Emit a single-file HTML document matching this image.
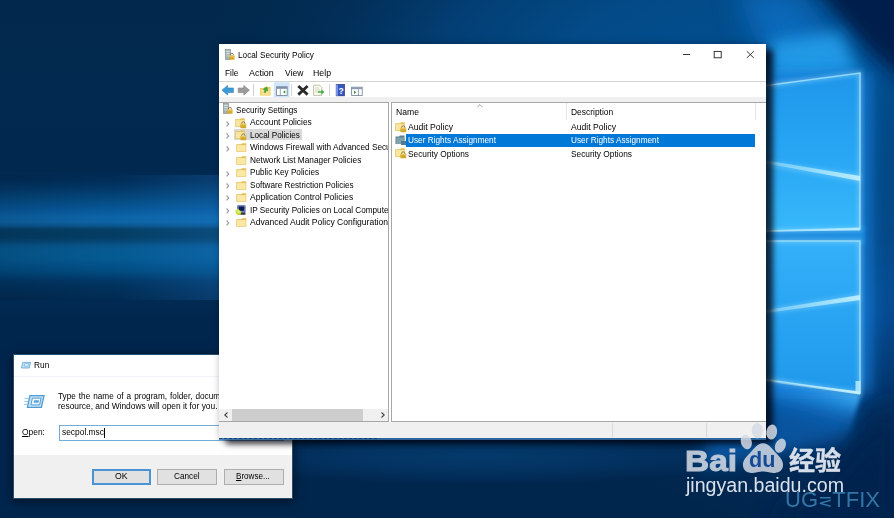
<!DOCTYPE html><html><head><meta charset="utf-8"><title>Local Security Policy</title><style>
html,body{margin:0;padding:0}
body{width:894px;height:518px;overflow:hidden;position:relative;background:#02294d;font-family:"Liberation Sans",sans-serif}
.t{position:absolute;white-space:nowrap;line-height:1;transform-origin:0 0;display:block}
.a{position:absolute}
svg{position:absolute;overflow:visible}
#bg{left:0;top:0}
#run{position:absolute;left:14px;top:355px;width:278px;height:143px;background:#fff;overflow:hidden;box-shadow:0 0 0 1px rgba(120,175,220,.35),0 2px 9px 2px rgba(0,0,0,.5)}
#win{position:absolute;left:219px;top:44px;width:547px;height:394px;background:#fff;overflow:hidden}
#winsh{position:absolute;left:219px;top:44px;width:547px;height:394px;box-shadow:2px 1px 8px 0 rgba(0,5,25,.4),7px 6px 6px 0 rgba(0,0,10,.72)}
.btn{position:absolute;box-sizing:border-box;background:#e1e1e1;border:1px solid #adadad}
</style></head><body>
<svg id="bg" width="894" height="518" viewBox="0 0 894 518">
<defs>
<linearGradient id="g0" x1="0" y1="0" x2="0" y2="518" gradientUnits="userSpaceOnUse">
<stop offset="0.0000" stop-color="#02294d"/>
<stop offset="0.3282" stop-color="#01284f"/>
<stop offset="0.3475" stop-color="#012d58"/>
<stop offset="0.3668" stop-color="#023a6a"/>
<stop offset="0.3861" stop-color="#044a80"/>
<stop offset="0.4054" stop-color="#07589a"/>
<stop offset="0.4189" stop-color="#0d64a5"/>
<stop offset="0.4286" stop-color="#0d64a5"/>
<stop offset="0.4363" stop-color="#09558c"/>
<stop offset="0.4421" stop-color="#054068"/>
<stop offset="0.4498" stop-color="#043c62"/>
<stop offset="0.4595" stop-color="#043e66"/>
<stop offset="0.4672" stop-color="#054878"/>
<stop offset="0.4749" stop-color="#07568c"/>
<stop offset="0.4826" stop-color="#065a92"/>
<stop offset="0.4981" stop-color="#055a92"/>
<stop offset="0.5116" stop-color="#02528a"/>
<stop offset="0.5251" stop-color="#014a7e"/>
<stop offset="0.5405" stop-color="#013868"/>
<stop offset="0.5521" stop-color="#01325c"/>
<stop offset="0.5792" stop-color="#012a52"/>
<stop offset="0.6178" stop-color="#01264e"/>
<stop offset="1.0000" stop-color="#01264e"/>
</linearGradient>
<linearGradient id="gh" x1="0" y1="0" x2="230" y2="0" gradientUnits="userSpaceOnUse">
<stop offset="0" stop-color="#000c20" stop-opacity=".14"/>
<stop offset="0.45" stop-color="#000c20" stop-opacity="0"/>
<stop offset="0.5" stop-color="#2a90f0" stop-opacity="0"/>
<stop offset="1" stop-color="#2a90f0" stop-opacity=".2"/>
</linearGradient>
<radialGradient id="g1" cx="815" cy="232" r="300" gradientUnits="userSpaceOnUse">
<stop offset="0" stop-color="#0c6cc4" stop-opacity="1"/>
<stop offset="0.3" stop-color="#0858a8" stop-opacity=".9"/>
<stop offset="0.6" stop-color="#05468c" stop-opacity=".45"/>
<stop offset="1" stop-color="#023060" stop-opacity="0"/>
</radialGradient>
<radialGradient id="g2" cx="720" cy="70" r="520" gradientUnits="userSpaceOnUse" gradientTransform="translate(720 70) scale(1 0.5) translate(-720 -70)">
<stop offset="0" stop-color="#025092" stop-opacity=".95"/>
<stop offset="0.3" stop-color="#034e8e" stop-opacity=".9"/>
<stop offset="0.55" stop-color="#03447e" stop-opacity=".78"/>
<stop offset="0.8" stop-color="#023260" stop-opacity=".4"/>
<stop offset="1" stop-color="#022c54" stop-opacity="0"/>
</radialGradient>
<radialGradient id="g3" cx="480" cy="456" r="280" gradientUnits="userSpaceOnUse" gradientTransform="translate(480 456) scale(1 0.1) translate(-480 -456)">
<stop offset="0" stop-color="#043a6c" stop-opacity="1"/>
<stop offset="0.5" stop-color="#04386a" stop-opacity=".7"/>
<stop offset="1" stop-color="#04386a" stop-opacity="0"/>
</radialGradient>
<linearGradient id="bm" x1="820" y1="388" x2="808" y2="430" gradientUnits="userSpaceOnUse">
<stop offset="0" stop-color="#48b4f6" stop-opacity=".95"/>
<stop offset="0.25" stop-color="#2a98ea" stop-opacity=".7"/>
<stop offset="0.6" stop-color="#1478d0" stop-opacity=".3"/>
<stop offset="1" stop-color="#0a64b8" stop-opacity="0"/>
</linearGradient>
<linearGradient id="stk" x1="680" y1="0" x2="860" y2="0" gradientUnits="userSpaceOnUse">
<stop offset="0.3" stop-color="#b8ecff" stop-opacity=".15"/>
<stop offset="1" stop-color="#c8f2ff" stop-opacity=".95"/>
</linearGradient>
<linearGradient id="pane1" x1="0" y1="72" x2="0" y2="232" gradientUnits="userSpaceOnUse">
<stop offset="0" stop-color="#1e96ea"/>
<stop offset="0.5" stop-color="#28a6f4"/>
<stop offset="1" stop-color="#38b8fb"/>
</linearGradient>
<linearGradient id="pane2" x1="0" y1="241" x2="0" y2="394" gradientUnits="userSpaceOnUse">
<stop offset="0" stop-color="#34b0f9"/>
<stop offset="0.5" stop-color="#29a4f3"/>
<stop offset="1" stop-color="#1f98ea"/>
</linearGradient>
<filter id="b8" x="-50%" y="-50%" width="200%" height="200%"><feGaussianBlur stdDeviation="8"/></filter>
<filter id="b14" x="-50%" y="-50%" width="200%" height="200%"><feGaussianBlur stdDeviation="14"/></filter>
<filter id="b5" x="-50%" y="-50%" width="200%" height="200%"><feGaussianBlur stdDeviation="5"/></filter>
<filter id="b3" x="-50%" y="-50%" width="200%" height="200%"><feGaussianBlur stdDeviation="2"/></filter>
<filter id="b1" x="-50%" y="-50%" width="200%" height="200%"><feGaussianBlur stdDeviation="0.7"/></filter>
</defs>
<rect width="894" height="518" fill="url(#g0)"/>
<rect x="0" y="175" width="230" height="125" fill="url(#gh)"/>
<rect width="894" height="518" fill="url(#g1)"/>
<rect width="894" height="518" fill="url(#g2)"/>
<rect width="894" height="518" fill="url(#g3)"/>
<!-- dark corners right -->
<polygon points="806,-20 910,-20 910,85 872,52" fill="#021a48" opacity=".95" filter="url(#b8)"/>
<polygon points="900,395 900,530 770,530 872,420" fill="#02204e" opacity=".85" filter="url(#b14)"/>
<!-- beams -->
<polygon points="775,86 860,72 798,-10 735,-10" fill="#0a74cc" opacity=".7" filter="url(#b14)"/>
<polygon points="770,88 860,75 840,32 770,42" fill="#25a2ee" opacity=".85" filter="url(#b8)"/>
<polygon points="720,380 860,394 845,440 700,470" fill="#0a64b8" opacity=".7" filter="url(#b8)"/>
<polygon points="772,381 861,394 850,432 745,428" fill="url(#bm)" filter="url(#b3)"/>
<!-- glow -->
<rect x="690" y="72" width="180" height="322" fill="#1880dc" opacity=".9" filter="url(#b8)"/>
<rect x="690" y="226" width="174" height="18" fill="#1a8ce0" filter="url(#b3)"/>
<!-- panes -->
<polygon points="680,97 860,73 860,229 680,233" fill="url(#pane1)"/>
<polygon points="680,241 860,241 860,393 680,367" fill="url(#pane2)"/>
<g fill="none" stroke="#9fe2ff" stroke-width="4" opacity=".45" filter="url(#b3)">
<polygon points="680,97 860,73 860,229 680,233"/>
<polygon points="680,241 860,241 860,393 680,367"/>
</g>
<g fill="none" stroke="#a8e6ff" stroke-width="1.5" opacity=".8" filter="url(#b1)">
<polygon points="680,97 860,73 860,229 680,233"/>
<polygon points="680,241 860,241 860,393 680,367"/>
</g>
<g stroke="#c4f0ff" stroke-width="2.6" opacity=".75" filter="url(#b1)">
<line x1="859.5" y1="73" x2="859.5" y2="229"/><line x1="859.5" y1="241" x2="859.5" y2="393"/>
</g>
<polygon points="740,376.5 860,391.5 860,394.5 740,378" fill="url(#stk)" filter="url(#b1)"/>
<polygon points="740,230.8 860,227.5 860,230.5 740,232" fill="url(#stk)" opacity=".8" filter="url(#b1)"/>
<rect x="855.5" y="381" width="5" height="13" fill="#bfeeff" opacity=".8" filter="url(#b1)"/>
<polygon points="680,146 860,176 860,181 680,147" fill="url(#stk)" filter="url(#b1)"/>
<polygon points="680,324 860,295 860,300 680,325" fill="url(#stk)" filter="url(#b1)"/>
<polygon points="760,160 860,174 860,183 760,165" fill="#a8e6ff" opacity=".3" filter="url(#b3)"/>
<polygon points="760,310 860,293 860,302 760,315" fill="#a8e6ff" opacity=".3" filter="url(#b3)"/>
</svg>
<div id="run"><div class="a" style="left:0.00px;top:100.00px;width:278.00px;height:43.00px;background:#f0f0f0"></div><div class="a" style="left:0.00px;top:21.00px;width:278.00px;height:1.00px;background:#f0f4f8"></div><span class="t" style="left:20.40px;top:7.00px;font-size:8.20px;color:#000;transform:scaleX(1.0179);">Run</span><span class="t" style="left:44.40px;top:38.00px;font-size:8.20px;color:#000;transform:scaleX(1.0041);word-spacing:.7px;">Type the name of a program, folder, document, or Internet</span><span class="t" style="left:44.40px;top:48.00px;font-size:8.20px;color:#000;transform:scaleX(1.0248);">resource, and Windows will open it for you.</span><span class="t" style="left:8.40px;top:74.00px;font-size:8.20px;color:#000;transform:scaleX(1.0263);"><u>O</u>pen:</span><div class="a" style="left:45.00px;top:70.00px;width:225.00px;height:16.00px;box-sizing:border-box;border:1px solid #74acd9;background:#fff"></div><span class="t" style="left:48.00px;top:74.00px;font-size:8.20px;color:#000;transform:scaleX(1.0256);">secpol.msc</span><div class="a" style="left:90.20px;top:72.50px;width:0.80px;height:10.00px;background:#000"></div><div class="btn" style="left:77.8px;top:113.7px;width:59.5px;height:16px;border:2px solid #4a94d6"></div><div class="btn" style="left:143.1px;top:113.7px;width:59.7px;height:16px"></div><div class="btn" style="left:209.5px;top:113.7px;width:60.5px;height:16px"></div><span class="t" style="left:101.20px;top:118.00px;font-size:8.20px;color:#000;transform:scaleX(1.0639);">OK</span><span class="t" style="left:160.30px;top:118.00px;font-size:8.20px;color:#000;transform:scaleX(1.0039);">Cancel</span><span class="t" style="left:222.00px;top:118.00px;font-size:8.20px;color:#000;transform:scaleX(0.9900);"><u>B</u>rowse...</span><svg style="left:7.1px;top:6.6px" width="10" height="6.4" viewBox="0 0 20 12.8"><polygon points="3.5,0.8 19.2,0.8 16.5,12 0.8,12" fill="#c4e2f5" stroke="#5aa3d6" stroke-width="1.6"/><polygon points="7.5,3.6 15.5,3.6 14.4,8.4 6.4,8.4" fill="#f2f9fe" stroke="#5aa3d6" stroke-width="1.2"/></svg><svg style="left:10.0px;top:40.3px" width="20.6" height="13" viewBox="0 0 20.6 13"><g fill="none" stroke="#86c0e6" stroke-width="0.9"><line x1="0.6" y1="3.4" x2="4.6" y2="3.4"/><line x1="0.2" y1="6.4" x2="4" y2="6.4"/><line x1="0" y1="9.4" x2="3.2" y2="9.4"/></g><polygon points="6,0.7 20,0.7 17.4,12.3 3.4,12.3" fill="#c9e5f7" stroke="#4f9bd2" stroke-width="1.3"/><polygon points="8.4,3.1 17.1,3.1 15.6,9.9 6.9,9.9" fill="#eef8fe" stroke="#4f9bd2" stroke-width="1"/><polygon points="10.2,5.3 15,5.3 14.5,7.7 9.7,7.7" fill="#5aa2d6"/></svg></div><div id="winsh"></div><div id="win"><span class="t" style="left:19.40px;top:8.00px;font-size:8.20px;color:#000;transform:scaleX(1.0060);">Local Security Policy</span><span class="t" style="left:6.10px;top:26.00px;font-size:8.20px;color:#000;transform:scaleX(1.0149);">File</span><span class="t" style="left:30.10px;top:26.00px;font-size:8.20px;color:#000;transform:scaleX(1.0894);">Action</span><span class="t" style="left:65.60px;top:26.00px;font-size:8.20px;color:#000;transform:scaleX(1.0392);">View</span><span class="t" style="left:94.20px;top:26.00px;font-size:8.20px;color:#000;transform:scaleX(1.0686);">Help</span><svg style="left:0;top:0" width="547" height="30" viewBox="219 44 547 30"><g stroke="#222" stroke-width="0.9" fill="none"><line x1="683" y1="54.5" x2="690" y2="54.5"/><rect x="714.2" y="51.4" width="7" height="6.4"/><path d="M746.8 51.2 L753.8 58 M753.8 51.2 L746.8 58"/></g></svg><div class="a" style="left:0.00px;top:37.00px;width:547.00px;height:1.00px;background:#d4d4d4"></div><div class="a" style="left:0.00px;top:53.00px;width:547.00px;height:5.00px;background:#f0f0f0"></div><div class="a" style="left:0.00px;top:377.50px;width:547.00px;height:17.00px;background:#f0f0f0"></div><div class="a" style="left:392.60px;top:379.00px;width:1.00px;height:14.00px;background:#d9d9d9"></div><div class="a" style="left:486.60px;top:379.00px;width:1.00px;height:14.00px;background:#d9d9d9"></div><div class="a" id="tree" style="left:0;top:58.0px;width:170px;height:320px;box-sizing:border-box;border:1px solid #a6a6a6;border-left:none;background:#fff;overflow:hidden"><svg style="left:4.3px;top:0.4px" width="10" height="11.4" viewBox="0 0 22 23"><rect x="1" y="0" width="11" height="22" fill="#9fb0b3" stroke="#6d8388" stroke-width="1.2"/><rect x="2.5" y="3" width="8" height="2.4" fill="#dfe7e8"/><rect x="2.5" y="8" width="8" height="2.4" fill="#dfe7e8"/><rect x="2.5" y="13" width="8" height="2.4" fill="#c5d4d6"/><path d="M12 13.5 v-2 a3.2 3.2 0 0 1 6.4 0 v2" fill="none" stroke="#6b5a2a" stroke-width="1.7"/><rect x="9" y="13" width="12" height="9.5" rx="1" fill="#d9a932"/><rect x="9" y="13" width="12" height="3" rx="1" fill="#ecc863"/></svg><span class="t" style="left:17.10px;top:4.00px;font-size:8.20px;color:#000;transform:scaleX(0.9978);">Security Settings</span><svg style="left:6.8px;top:17.5px" width="3.4" height="5.8" viewBox="0 0 4 7"><path d="M0.6 0.6 L3.2 3.5 L0.6 6.4" fill="none" stroke="#a0a0a0" stroke-width="1.5"/></svg><svg style="left:16.3px;top:14.5px" width="11.5" height="10.5" viewBox="0 0 23 21"><path d="M0.5 2.5 L10 2.5 L12 0.5 L19.4 0.5 L19.4 17.8 L0.5 17.8 Z" fill="#e4c058"/><rect x="1.6" y="4.2" width="16.8" height="12.6" fill="#f8e6a0"/><path d="M13.4 12.4 v-1.6 a3.2 3.2 0 0 1 6.4 0 v1.6" fill="none" stroke="#7d6c2c" stroke-width="1.7"/><rect x="10.8" y="12" width="11.6" height="8.4" rx="1" fill="#d2a92f"/><rect x="10.8" y="12" width="11.6" height="2.6" rx="1" fill="#e8c85e"/></svg><span class="t" style="left:30.60px;top:16.00px;font-size:8.20px;color:#000;transform:scaleX(1.0287);">Account Policies</span><div class="a" style="left:15.00px;top:26.20px;width:68.00px;height:11.30px;background:#d9d9d9"></div><svg style="left:6.8px;top:30.0px" width="3.4" height="5.8" viewBox="0 0 4 7"><path d="M0.6 0.6 L3.2 3.5 L0.6 6.4" fill="none" stroke="#a0a0a0" stroke-width="1.5"/></svg><svg style="left:16.3px;top:27.0px" width="11.5" height="10.5" viewBox="0 0 23 21"><path d="M0.5 2.5 L10 2.5 L12 0.5 L19.4 0.5 L19.4 17.8 L0.5 17.8 Z" fill="#e4c058"/><rect x="1.6" y="4.2" width="16.8" height="12.6" fill="#f8e6a0"/><path d="M13.4 12.4 v-1.6 a3.2 3.2 0 0 1 6.4 0 v1.6" fill="none" stroke="#7d6c2c" stroke-width="1.7"/><rect x="10.8" y="12" width="11.6" height="8.4" rx="1" fill="#d2a92f"/><rect x="10.8" y="12" width="11.6" height="2.6" rx="1" fill="#e8c85e"/></svg><span class="t" style="left:30.60px;top:29.00px;font-size:8.20px;color:#000;transform:scaleX(0.9948);">Local Policies</span><svg style="left:6.8px;top:42.5px" width="3.4" height="5.8" viewBox="0 0 4 7"><path d="M0.6 0.6 L3.2 3.5 L0.6 6.4" fill="none" stroke="#a0a0a0" stroke-width="1.5"/></svg><svg style="left:16.8px;top:40.2px" width="10.5" height="9" viewBox="0 0 21 18"><path d="M0.5 2.5 L10 2.5 L12 0.5 L20.5 0.5 L20.5 17.5 L0.5 17.5 Z" fill="#e4c058"/><rect x="1.6" y="4.2" width="17.8" height="12.2" fill="#f9e8a6"/></svg><span class="t" style="left:30.60px;top:41.00px;font-size:8.20px;color:#000;transform:scaleX(1.0071);">Windows Firewall with Advanced Security</span><svg style="left:16.8px;top:52.7px" width="10.5" height="9" viewBox="0 0 21 18"><path d="M0.5 2.5 L10 2.5 L12 0.5 L20.5 0.5 L20.5 17.5 L0.5 17.5 Z" fill="#e4c058"/><rect x="1.6" y="4.2" width="17.8" height="12.2" fill="#f9e8a6"/></svg><span class="t" style="left:30.60px;top:54.00px;font-size:8.20px;color:#000;transform:scaleX(1.0107);">Network List Manager Policies</span><svg style="left:6.8px;top:67.5px" width="3.4" height="5.8" viewBox="0 0 4 7"><path d="M0.6 0.6 L3.2 3.5 L0.6 6.4" fill="none" stroke="#a0a0a0" stroke-width="1.5"/></svg><svg style="left:16.8px;top:65.2px" width="10.5" height="9" viewBox="0 0 21 18"><path d="M0.5 2.5 L10 2.5 L12 0.5 L20.5 0.5 L20.5 17.5 L0.5 17.5 Z" fill="#e4c058"/><rect x="1.6" y="4.2" width="17.8" height="12.2" fill="#f9e8a6"/></svg><span class="t" style="left:30.60px;top:66.00px;font-size:8.20px;color:#000;transform:scaleX(0.9990);">Public Key Policies</span><svg style="left:6.8px;top:79.9px" width="3.4" height="5.8" viewBox="0 0 4 7"><path d="M0.6 0.6 L3.2 3.5 L0.6 6.4" fill="none" stroke="#a0a0a0" stroke-width="1.5"/></svg><svg style="left:16.8px;top:77.6px" width="10.5" height="9" viewBox="0 0 21 18"><path d="M0.5 2.5 L10 2.5 L12 0.5 L20.5 0.5 L20.5 17.5 L0.5 17.5 Z" fill="#e4c058"/><rect x="1.6" y="4.2" width="17.8" height="12.2" fill="#f9e8a6"/></svg><span class="t" style="left:30.60px;top:79.00px;font-size:8.20px;color:#000;transform:scaleX(0.9995);">Software Restriction Policies</span><svg style="left:6.8px;top:92.4px" width="3.4" height="5.8" viewBox="0 0 4 7"><path d="M0.6 0.6 L3.2 3.5 L0.6 6.4" fill="none" stroke="#a0a0a0" stroke-width="1.5"/></svg><svg style="left:16.8px;top:90.1px" width="10.5" height="9" viewBox="0 0 21 18"><path d="M0.5 2.5 L10 2.5 L12 0.5 L20.5 0.5 L20.5 17.5 L0.5 17.5 Z" fill="#e4c058"/><rect x="1.6" y="4.2" width="17.8" height="12.2" fill="#f9e8a6"/></svg><span class="t" style="left:30.60px;top:91.00px;font-size:8.20px;color:#000;transform:scaleX(1.0411);">Application Control Policies</span><svg style="left:6.8px;top:104.9px" width="3.4" height="5.8" viewBox="0 0 4 7"><path d="M0.6 0.6 L3.2 3.5 L0.6 6.4" fill="none" stroke="#a0a0a0" stroke-width="1.5"/></svg><svg style="left:15.8px;top:101.6px" width="11" height="10.5" viewBox="0 0 22 21"><rect x="5" y="0.8" width="15.5" height="14" rx="1" fill="#6a86c4" stroke="#3a4f8a" stroke-width="1"/><rect x="7.4" y="3" width="10.8" height="8.6" fill="#121a52"/><rect x="6" y="14.8" width="15" height="4.8" rx="1" fill="#34363c"/><path d="M0.6 11.6 L6.4 7.2 L8 9.4 L13 13.6 L11 19.6 L5.4 19.8 L2 16.4 Z" fill="#c4dc3c"/><path d="M3 12.6 L6.6 10 L10 13.6 L8 16.6 Z" fill="#e6f27e"/></svg><span class="t" style="left:30.60px;top:104.00px;font-size:8.20px;color:#000;transform:scaleX(0.9987);">IP Security Policies on Local Computer</span><svg style="left:6.8px;top:117.4px" width="3.4" height="5.8" viewBox="0 0 4 7"><path d="M0.6 0.6 L3.2 3.5 L0.6 6.4" fill="none" stroke="#a0a0a0" stroke-width="1.5"/></svg><svg style="left:16.8px;top:115.1px" width="10.5" height="9" viewBox="0 0 21 18"><path d="M0.5 2.5 L10 2.5 L12 0.5 L20.5 0.5 L20.5 17.5 L0.5 17.5 Z" fill="#e4c058"/><rect x="1.6" y="4.2" width="17.8" height="12.2" fill="#f9e8a6"/></svg><span class="t" style="left:30.60px;top:116.00px;font-size:8.20px;color:#000;transform:scaleX(1.0455);">Advanced Audit Policy Configuration</span><div class="a" style="left:0.00px;top:306.00px;width:169.00px;height:11.50px;background:#f0f0f0"></div><div class="a" style="left:13.00px;top:306.00px;width:130.60px;height:11.50px;background:#cdcdcd"></div><svg style="left:5.0px;top:308.7px" width="4" height="6" viewBox="0 0 4 6"><path d="M3.5 0.5 L0.8 3 L3.5 5.5" fill="none" stroke="#444" stroke-width="1.1"/></svg><svg style="left:161.5px;top:308.7px" width="4" height="6" viewBox="0 0 4 6"><path d="M0.5 0.5 L3.2 3 L0.5 5.5" fill="none" stroke="#444" stroke-width="1.1"/></svg></div><div class="a" id="list" style="left:172.0px;top:58.0px;width:380px;height:320px;box-sizing:border-box;border:1px solid #a6a6a6;border-right:none;background:#fff;overflow:hidden"><span class="t" style="left:4.30px;top:6.00px;font-size:8.20px;color:#000;transform:scaleX(1.0529);">Name</span><span class="t" style="left:179.10px;top:6.00px;font-size:8.20px;color:#000;transform:scaleX(1.0301);">Description</span><div class="a" style="left:174.40px;top:0.00px;width:1.00px;height:16.50px;background:#e5e5e5"></div><div class="a" style="left:363.00px;top:0.00px;width:1.00px;height:16.50px;background:#e5e5e5"></div><svg style="left:85.3px;top:0.5px" width="6" height="3.5" viewBox="0 0 6 3.5"><path d="M0.4 3.2 L3 0.6 L5.6 3.2" fill="none" stroke="#8a8a8a" stroke-width="0.8"/></svg><div class="a" style="left:14.40px;top:30.60px;width:349.00px;height:13.00px;background:#0078d7"></div><span class="t" style="left:15.60px;top:21.00px;font-size:8.20px;color:#000;transform:scaleX(1.0519);">Audit Policy</span><span class="t" style="left:179.10px;top:21.00px;font-size:8.20px;color:#000;transform:scaleX(1.0519);">Audit Policy</span><svg style="left:3.0px;top:18.6px" width="11.5" height="10.5" viewBox="0 0 23 21"><path d="M0.5 2.5 L10 2.5 L12 0.5 L19.4 0.5 L19.4 17.8 L0.5 17.8 Z" fill="#e4c058"/><rect x="1.6" y="4.2" width="16.8" height="12.6" fill="#f8e6a0"/><path d="M13.4 12.4 v-1.6 a3.2 3.2 0 0 1 6.4 0 v1.6" fill="none" stroke="#7d6c2c" stroke-width="1.7"/><rect x="10.8" y="12" width="11.6" height="8.4" rx="1" fill="#d2a92f"/><rect x="10.8" y="12" width="11.6" height="2.6" rx="1" fill="#e8c85e"/></svg><span class="t" style="left:15.60px;top:34.00px;font-size:8.20px;color:#fff;transform:scaleX(1.0072);">User Rights Assignment</span><span class="t" style="left:179.10px;top:34.00px;font-size:8.20px;color:#fff;transform:scaleX(1.0072);">User Rights Assignment</span><svg style="left:3.0px;top:32.0px" width="11.5" height="10" viewBox="0 0 23 20"><path d="M1 3 L8 3 L10 1 L19 1 L19 18 L1 18 Z" fill="#5d7f8f"/><rect x="2.5" y="5" width="16.5" height="13" fill="#7fa3ad"/><rect x="12" y="12" width="10" height="8" fill="#4f7a9a"/></svg><span class="t" style="left:15.60px;top:48.00px;font-size:8.20px;color:#000;transform:scaleX(1.0153);">Security Options</span><span class="t" style="left:179.10px;top:48.00px;font-size:8.20px;color:#000;transform:scaleX(1.0153);">Security Options</span><svg style="left:3.0px;top:45.4px" width="11.5" height="10.5" viewBox="0 0 23 21"><path d="M0.5 2.5 L10 2.5 L12 0.5 L19.4 0.5 L19.4 17.8 L0.5 17.8 Z" fill="#e4c058"/><rect x="1.6" y="4.2" width="16.8" height="12.6" fill="#f8e6a0"/><path d="M13.4 12.4 v-1.6 a3.2 3.2 0 0 1 6.4 0 v1.6" fill="none" stroke="#7d6c2c" stroke-width="1.7"/><rect x="10.8" y="12" width="11.6" height="8.4" rx="1" fill="#d2a92f"/><rect x="10.8" y="12" width="11.6" height="2.6" rx="1" fill="#e8c85e"/></svg></div><svg style="left:0;top:0" width="547" height="60" viewBox="219 44 547 60"><rect x="274" y="82.3" width="15.6" height="15" fill="#cfe6fa"/><g stroke="#c8c8c8" stroke-width="0.8"><line x1="253.5" y1="84" x2="253.5" y2="96"/><line x1="291.6" y1="84" x2="291.6" y2="96"/><line x1="329.5" y1="84" x2="329.5" y2="96"/></g><path d="M222 90.2 L227.6 85.4 L227.6 88 L233.4 88 L233.4 92.6 L227.6 92.6 L227.6 95 Z" fill="#3d9ad8" stroke="#2b7cb8" stroke-width="0.6" stroke-linejoin="round"/><path d="M249.4 90.2 L243.8 85.4 L243.8 88 L238.2 88 L238.2 92.6 L243.8 92.6 L243.8 95 Z" fill="#9c9c9c" stroke="#808080" stroke-width="0.6" stroke-linejoin="round"/><path d="M260 88 L263.5 88 L264.5 87 L270.5 87 L270.5 95.4 L260 95.4 Z" fill="#e9c85e"/><rect x="260.7" y="89.3" width="9.8" height="6.1" fill="#f6e08e"/><path d="M263 90.5 L266 86 L269 90.5 L267 90.5 L267 93 L265 93 L265 90.5 Z" fill="#4aa53a" transform="rotate(20 266 89)"/><rect x="276.6" y="86.8" width="10.6" height="8.6" fill="#fff" stroke="#6d7f92" stroke-width="0.8"/><rect x="276.6" y="86.8" width="10.6" height="2" fill="#7d8fa3"/><line x1="280.3" y1="88.8" x2="280.3" y2="95.4" stroke="#6d7f92" stroke-width="0.7"/><path d="M285.3 90.3 L283 92 L285.3 93.7 Z" fill="#3a9a3a"/><path d="M298.3 86 L307.6 94.6 M307.6 86 L298.3 94.6" stroke="#2a2a2a" stroke-width="2.8" stroke-linecap="butt"/><path d="M313.6 85.2 L319.5 85.2 L321.8 87.5 L321.8 95.4 L313.6 95.4 Z" fill="#fdfdf2" stroke="#a8a88a" stroke-width="0.7"/><g stroke="#b9b99a" stroke-width="0.6"><line x1="315" y1="88" x2="319" y2="88"/><line x1="315" y1="90" x2="320" y2="90"/><line x1="315" y1="92" x2="318" y2="92"/></g><path d="M318 91.2 L321.4 91.2 L321.4 89.6 L324.4 92 L321.4 94.4 L321.4 92.8 L318 92.8 Z" fill="#3fae3a"/><rect x="336.2" y="84.5" width="8.2" height="11.3" fill="#3656c0" stroke="#1e2f7a" stroke-width="0.7"/><rect x="336.2" y="84.5" width="1.6" height="11.3" fill="#8aa0e8"/><text x="341" y="93.6" font-family="Liberation Sans, sans-serif" font-size="8.5" font-weight="bold" fill="#fff" text-anchor="middle">?</text><rect x="351.6" y="87.2" width="10.6" height="8.2" fill="#fff" stroke="#6d7f92" stroke-width="0.8"/><rect x="351.6" y="87.2" width="10.6" height="2" fill="#8e9db0"/><line x1="358.4" y1="89.2" x2="358.4" y2="95.4" stroke="#6d7f92" stroke-width="0.7"/><path d="M354 90.6 L356.3 92.3 L354 94 Z" fill="#3a9a3a"/></svg><svg style="left:6.0px;top:5.0px" width="10" height="11.4" viewBox="0 0 22 23"><rect x="1" y="0" width="11" height="22" fill="#9fb0b3" stroke="#6d8388" stroke-width="1.2"/><rect x="2.5" y="3" width="8" height="2.4" fill="#dfe7e8"/><rect x="2.5" y="8" width="8" height="2.4" fill="#dfe7e8"/><rect x="2.5" y="13" width="8" height="2.4" fill="#c5d4d6"/><path d="M12 13.5 v-2 a3.2 3.2 0 0 1 6.4 0 v2" fill="none" stroke="#6b5a2a" stroke-width="1.7"/><rect x="9" y="13" width="12" height="9.5" rx="1" fill="#d9a932"/><rect x="9" y="13" width="12" height="3" rx="1" fill="#ecc863"/></svg></div><div class="a" style="left:219.00px;top:438.00px;width:547.00px;height:1.50px;background:rgba(52,116,176,.85)"></div><div class="a" style="left:219.00px;top:437.60px;width:158.00px;height:0.00px;border-top:1.6px dashed rgba(20,55,100,.75)"></div><div class="a" id="wm" style="left:0;top:0;width:894px;height:518px;pointer-events:none"><span class="t" style="left:785.00px;top:490.00px;font-size:21.50px;color:rgba(70,150,200,.72);transform:scaleX(1.0232);">UG<span style="font-size:17px">⋜</span>TFIX</span><svg style="left:0;top:0;opacity:.84" width="894" height="518" viewBox="0 0 894 518"><g fill="#d6dce6">
<ellipse cx="746.3" cy="442" rx="5.4" ry="7.4" transform="rotate(-18 746.3 442)"/>
<ellipse cx="757.4" cy="430.7" rx="5.7" ry="7.7" transform="rotate(-6 757.4 430.7)"/>
<ellipse cx="771.7" cy="432" rx="5.4" ry="7.5" transform="rotate(10 771.7 432)"/>
<ellipse cx="780.4" cy="445.7" rx="5.2" ry="7.4" transform="rotate(24 780.4 445.7)"/>
<path d="M763 443.3 C769 443.3 771.5 448.5 776 453 C780.5 457.5 783.5 461 783 466 C782.3 472.5 775 473.8 770 472.6 C766.5 471.8 765 471.5 763 471.5 C761 471.5 759.5 471.8 756 472.6 C751 473.8 743.7 472.5 743 466 C742.5 461 745.5 457.5 750 453 C754.5 448.5 757 443.3 763 443.3 Z"/>
</g></svg><span class="t" style="left:685.30px;top:446.00px;font-size:30.00px;color:#d6dce6;transform:scaleX(1.1138);font-weight:bold;-webkit-text-stroke:1px #d6dce6;opacity:.86">Bai</span><span class="t" style="left:748.80px;top:449.00px;font-size:22.00px;color:#154a96;transform:scaleX(0.9818);font-weight:bold">du</span><span class="t" style="left:789.00px;top:448.00px;font-size:26.00px;color:#e9eef6;transform:scaleX(0.9997);font-weight:bold;opacity:.92;-webkit-text-stroke:.4px #e9eef6;font-family:'Liberation Sans','Noto Sans CJK SC',sans-serif">经验</span><span class="t" style="left:686.00px;top:476.00px;font-size:19.60px;color:rgba(235,240,247,.93);transform:scaleX(1.0004);">jingyan.baidu.com</span></div></body></html>
